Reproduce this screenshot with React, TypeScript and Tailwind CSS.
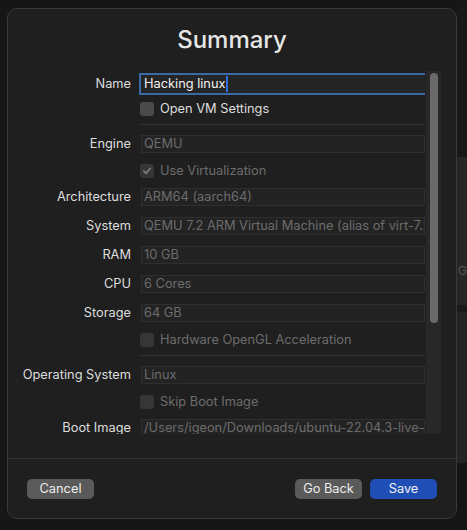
import React from "react";

type FieldRow = { kind: "field"; label: string; value: string };
type CheckRow = { kind: "check"; label: string; checked?: boolean; enabled?: boolean };
type SepRow = { kind: "sep" };
type Row = FieldRow | CheckRow | SepRow;

const rows: Row[] = [
  { kind: "check", label: "Open VM Settings", enabled: true },
  { kind: "sep" },
  { kind: "field", label: "Engine", value: "QEMU" },
  { kind: "check", label: "Use Virtualization", checked: true },
  { kind: "field", label: "Architecture", value: "ARM64 (aarch64)" },
  { kind: "field", label: "System", value: "QEMU 7.2 ARM Virtual Machine (alias of virt-7.2)" },
  { kind: "field", label: "RAM", value: "10 GB" },
  { kind: "field", label: "CPU", value: "6 Cores" },
  { kind: "field", label: "Storage", value: "64 GB" },
  { kind: "check", label: "Hardware OpenGL Acceleration" },
  { kind: "sep" },
  { kind: "field", label: "Operating System", value: "Linux" },
  { kind: "check", label: "Skip Boot Image" },
  { kind: "field", label: "Boot Image", value: "/Users/igeon/Downloads/ubuntu-22.04.3-live-server-arm64.iso" },
];

const Checkbox = ({ checked, enabled }: { checked?: boolean; enabled?: boolean }) => (
  <div
    className={
      "w-[14px] h-[14px] rounded-[3px] flex items-center justify-center shrink-0 " +
      (enabled ? "bg-[#4a4a4a]" : "bg-[#363636]")
    }
  >
    {checked && (
      <svg width="10" height="10" viewBox="0 0 10 10">
        <path d="M1.8 5.2 L4 7.4 L8.3 2.4" fill="none" stroke="#7a7a7a" strokeWidth="1.8" strokeLinecap="round" strokeLinejoin="round" />
      </svg>
    )}
  </div>
);

const FormRow = ({ row }: { row: Row }) => {
  if (row.kind === "sep") {
    return (
      <div className="flex py-[4px]">
        <div className="w-[133px] shrink-0" />
        <div className="flex-1 h-px bg-[#363636]" />
      </div>
    );
  }
  if (row.kind === "check") {
    return (
      <div className="flex items-center h-[24px] pt-px">
        <div className="w-[132px] shrink-0" />
        <Checkbox checked={row.checked} enabled={row.enabled} />
        <span className={"ml-[6px] " + (row.enabled ? "text-[#dedede]" : "text-[#6c6c6c]")}>{row.label}</span>
      </div>
    );
  }
  return (
    <div className="flex items-center h-[29px]">
      <div className="w-[123px] shrink-0 text-right text-[#dedede] whitespace-nowrap">{row.label}</div>
      <div className="ml-[10px] flex-1 min-w-0 h-[18px] bg-[#232323] border border-[#2f2f2f] flex items-center px-[2px] overflow-hidden">
        <span className="text-[#6c6c6c] whitespace-nowrap">{row.value}</span>
      </div>
    </div>
  );
};

export default function App() {
  return (
    <div className="w-[467px] h-[530px] bg-[#161616] flex overflow-hidden text-[12.8px]" style={{ fontFamily: "Inter, 'Noto Sans', sans-serif" }}>
      <div className="w-[7px] shrink-0" />
      <div className="mt-[8px] w-[450px] h-[511px] shrink-0 rounded-[10px] border border-[#3a3a3a] bg-[#1f1f1f] flex flex-col">
        <div className="pt-[15px] h-[32px] box-content text-center text-[24px] leading-[32px] font-medium text-[#e6e6e6]">Summary</div>

        <div className="mt-[15px] h-[363px] flex overflow-hidden">
          <div className="flex-1 min-w-0 overflow-hidden">
            <div className="flex items-center h-[25px]">
              <div className="w-[123px] shrink-0 text-right text-[#dedede]">Name</div>
              <div className="ml-[10px] flex-1 h-[18px] bg-[#252525] ring-2 ring-[#3a6aa3] flex items-center px-[3px]">
                <span className="text-[#f2f2f2]">Hacking linux</span>
                <span className="w-[2px] h-[16px] bg-[#2a6fe0] ml-px" />
              </div>
            </div>
            {rows.map((r, i) => (
              <FormRow key={i} row={r} />
            ))}
          </div>
          <div className="ml-px w-[15px] shrink-0 bg-[#282828] flex justify-center pt-[2px]">
            <div className="w-[8px] h-[250px] rounded-full bg-[#6a6a6a]" />
          </div>
          <div className="w-[15px] shrink-0" />
        </div>

        <div className="mt-[24px] h-px bg-[#333333]" />

        <div className="mt-[20px] px-[19px] flex items-center">
          <button className="w-[67px] h-[20px] rounded-[5px] bg-[#5a5a5a] text-[#ececec]">Cancel</button>
          <div className="flex-1" />
          <button className="w-[67px] h-[20px] rounded-[5px] bg-[#5a5a5a] text-[#ececec]">Go Back</button>
          <button className="ml-[8px] w-[67px] h-[20px] rounded-[5px] bg-[#1f4fb6] text-[#f0f0f0]">Save</button>
        </div>
      </div>

      <div className="w-[10px] shrink-0 flex flex-col overflow-hidden">
        <div className="h-[157px] bg-[#181818]" />
        <div className="h-[148px] bg-[#262626] pt-[104px] pl-[1px]">
          <span className="text-[#555] text-[12px] whitespace-nowrap">Ga</span>
        </div>
        <div className="h-[7px] bg-[#1a1a1a]" />
        <div className="h-[151px] bg-[#242424]" />
        <div className="flex-1 bg-[#151515]" />
      </div>
    </div>
  );
}
